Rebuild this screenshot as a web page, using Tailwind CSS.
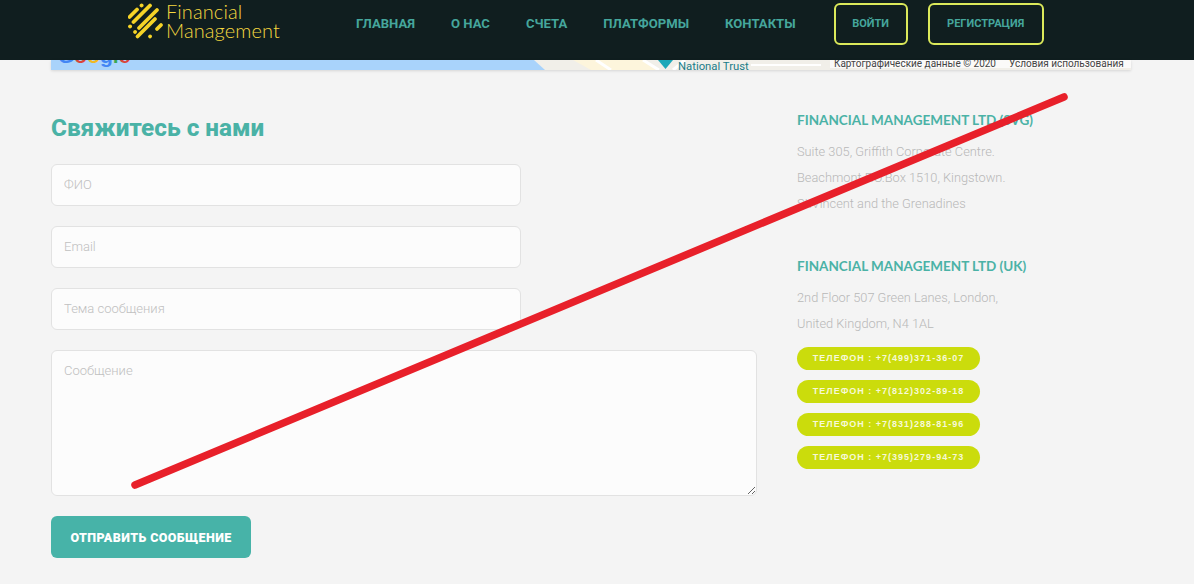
<!DOCTYPE html>
<html lang="en">
<head>
    <meta charset="UTF-8">
    <title>Контакты - Financial Management</title>
    <script src="https://cdn.jsdelivr.net/npm/@tailwindcss/browser@4"></script>
</head>
<body class="relative h-[584px] overflow-hidden bg-[#f4f4f4] font-['Roboto',sans-serif]">

    <!-- header -->
    <header class="h-[60px] bg-[#101e1f] flex items-start pl-[128px]">
        <a href="#" class="flex items-start gap-[2px] w-[228px] pt-[3px]">
            <svg width="36" height="37" viewBox="0 0 36 37" fill="none" stroke="#f5d327" stroke-width="3.8" stroke-linecap="round">
                <path d="M1.500 14 L9 6.500"/>
                <path d="M13.500 2.500 L13.600 2.400"/>
                <path d="M5.500 19 L22 2.500"/>
                <path d="M11 25 L29 7"/>
                <path d="M9.500 33.500 L27 16"/>
                <path d="M2 23.500 L2.100 23.400"/>
                <path d="M7 29 L7.100 28.900"/>
                <path d="M22 33.500 L22.100 33.400"/>
                <path d="M29 26 L33 22"/>
            </svg>
            <span class="block -mt-[1px] text-[#f5d83f] font-['Lato',sans-serif] text-[20px] font-light leading-[19px] tracking-[0.1px]">Financial<br>Management</span>
        </a>
        <nav class="flex items-center h-[48px] gap-[36px] text-[13.100px] font-bold uppercase text-[#45a69c]">
            <a href="#">Главная</a>
            <a href="#">О нас</a>
            <a href="#">Счета</a>
            <a href="#">Платформы</a>
            <a href="#">Контакты</a>
        </nav>
        <div class="flex gap-[20px] ml-[38px] mt-[3px] text-[11px] font-bold uppercase text-[#45a69c]">
            <a href="#" class="flex items-center justify-center w-[74px] h-[42px] pt-[1px] border-2 border-[#dbe95a] rounded-[6px]">Войти</a>
            <a href="#" class="flex items-center justify-center w-[116px] h-[42px] pt-[1px] border-2 border-[#dbe95a] rounded-[6px]">Регистрация</a>
        </div>
    </header>

    <!-- map strip -->
    <div class="relative mx-[51px] h-[10px] w-[1080px] overflow-hidden bg-[#f1efe9] shadow-[0_1px_3px_rgba(0,0,0,0.12)]">
        <svg class="absolute inset-0" width="1080" height="10" viewBox="0 0 1080 10">
            <path d="M0 0H483L494 10H0Z" fill="#a9d3fb"/>
            <path d="M522 0H592L606 10H540Z" fill="#fdf5dc"/>
            <path d="M545 0L560 10M592 0L608 10M622 10L634 0" stroke="#fff" stroke-width="3" fill="none"/>
            <path d="M607 0H622L614.500 9Z" fill="#1ca8b8"/>
            <path d="M700 5H770" stroke="#fff" stroke-width="2"/>
        </svg>
        <span class="absolute left-[7px] top-[-15px] text-[21px] font-bold leading-[21px] font-['Liberation_Sans',sans-serif]"><span class="text-[#4285f4]">G</span><span class="text-[#d9453a]">o</span><span class="text-[#f0b924]">o</span><span class="text-[#4285f4]">g</span><span class="text-[#38a853]">l</span><span class="text-[#d9453a]">e</span></span>
        <span class="absolute left-[627px] top-[1px] text-[11.300px] leading-[12px] text-[#1a7d8a]">National Trust</span>
        <div class="absolute right-0 top-0 flex h-[8px] w-[301px] items-center bg-white/70 pl-[4px] text-[10px] leading-[8px] text-[#444]">
            <span>Картографические данные © 2020</span>
            <span class="ml-[13px]">Условия использования</span>
        </div>
    </div>

    <!-- contact -->
    <main class="flex px-[51px] pt-[43px]">
        <section class="w-[706px]">
            <h2 class="text-[24.300px] font-extrabold leading-[30px] text-[#4ab2a6]">Свяжитесь с нами</h2>
            <form class="mt-[21px]">
                <input type="text" placeholder="ФИО" class="block w-[470px] h-[42px] px-3 pb-[2px] bg-[#fcfcfc] border border-[#e2e2e2] rounded-[6px] text-[13px] font-light placeholder:text-[#c0c0c0]">
                <input type="text" placeholder="Email" class="block mt-5 w-[470px] h-[42px] px-3 pb-[2px] bg-[#fcfcfc] border border-[#e2e2e2] rounded-[6px] text-[13px] font-light placeholder:text-[#c0c0c0]">
                <input type="text" placeholder="Тема сообщения" class="block mt-5 w-[470px] h-[42px] px-3 pb-[2px] bg-[#fcfcfc] border border-[#e2e2e2] rounded-[6px] text-[13px] font-light placeholder:text-[#c0c0c0]">
                <textarea placeholder="Сообщение" class="block mt-5 w-[706px] h-[146px] px-3 py-[10px] bg-[#fcfcfc] border border-[#e2e2e2] rounded-[6px] text-[13px] font-light placeholder:text-[#c0c0c0]"></textarea>
                <button type="button" class="block mt-5 w-[200px] h-[42px] pt-[2px] bg-[#47b3a8] rounded-[6px] text-white text-[12.500px] font-black uppercase tracking-[0.4px]">Отправить сообщение</button>
            </form>
        </section>

        <aside class="ml-[40px] -mt-[3px]">
            <h3 class="font-['Lato',sans-serif] text-[13.500px] font-bold leading-[20px] uppercase text-[#4ab2a6]">Financial Management LTD (SVG)</h3>
            <p class="mt-[9px] text-[12.800px] font-light leading-[26px] text-[#b8b8b8]">Suite 305, Griffith Corporate Centre.<br>Beachmont P.O.Box 1510, Kingstown.<br>St.Vincent and the Grenadines</p>
            <h3 class="mt-[39px] font-['Lato',sans-serif] text-[13.500px] font-bold leading-[20px] uppercase text-[#4ab2a6]">Financial Management LTD (UK)</h3>
            <p class="mt-[9px] text-[12.800px] font-light leading-[26px] text-[#b8b8b8]">2nd Floor 507 Green Lanes, London,<br>United Kingdom, N4 1AL</p>
            <div class="mt-[10px] flex flex-col gap-[10px] font-['Liberation_Sans',sans-serif] text-[9px] font-bold tracking-[1px] text-[#f7f9d8]">
                <a href="#" class="flex items-center justify-center w-[183px] h-[23px] rounded-full bg-[#cbdc0c]">ТЕЛЕФОН : +7(499)371-36-07</a>
                <a href="#" class="flex items-center justify-center w-[183px] h-[23px] rounded-full bg-[#cbdc0c]">ТЕЛЕФОН : +7(812)302-89-18</a>
                <a href="#" class="flex items-center justify-center w-[183px] h-[23px] rounded-full bg-[#cbdc0c]">ТЕЛЕФОН : +7(831)288-81-96</a>
                <a href="#" class="flex items-center justify-center w-[183px] h-[23px] rounded-full bg-[#cbdc0c]">ТЕЛЕФОН : +7(395)279-94-73</a>
            </div>
        </aside>
    </main>

    <!-- red strike across the page -->
    <svg class="absolute left-0 top-0 pointer-events-none" width="1194" height="584" viewBox="0 0 1194 584">
        <path d="M135 485 L1064 97" stroke="#e8202a" stroke-width="7.500" stroke-linecap="round"/>
    </svg>
</body>
</html>
